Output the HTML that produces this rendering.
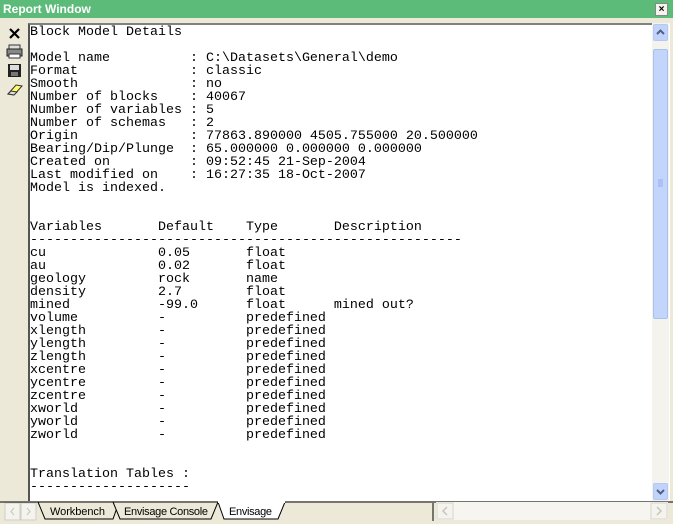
<!DOCTYPE html>
<html><head><style>
body{margin:0;width:673px;height:524px;background:#ece9d8;position:relative;overflow:hidden;font-family:"Liberation Sans",sans-serif}
#title{position:absolute;left:0;top:0;width:673px;height:18px;background:#5dbb7a;color:#fff;font-weight:bold;font-size:12px;line-height:18px;padding-left:3px;box-sizing:border-box}
#cls{position:absolute;right:5px;top:3px;width:11px;height:11px;background:#f4f3ee;border:1px solid #888;font-size:10px;line-height:11px;text-align:center;color:#000;font-weight:bold}
#text{position:absolute;left:28px;top:23px;width:624px;height:478px;background:#fff;border-left:2px solid #555;border-top:2px solid #808080;box-sizing:border-box;overflow:hidden}
pre{margin:0;padding:1px 0 0 0;font-family:"Liberation Mono",monospace;font-size:13.33px;line-height:13px;color:#000}
#vs{position:absolute;left:652px;top:23px;width:17px;height:478px;background:#f4f3ee}
.btn{position:absolute;left:1px;width:15px;height:17px;background:#c1d3fb;border:1px solid #b3c8f3;border-radius:2px;box-sizing:border-box}
#thumb{position:absolute;left:1px;top:26px;width:15px;height:270px;background:#c4d5fc;border:1px solid #aac0f0;border-radius:2px;box-sizing:border-box}
#bot{position:absolute;left:0;top:501px;width:673px;height:23px;background:#ece9d8}
</style></head><body>
<div id="title">Report Window<div id="cls">×</div></div>
<svg style="position:absolute;left:0;top:18px" width="28" height="90">
<path d="M10 11 L19 20 M19 11 L10 20" stroke="#000" stroke-width="2.2"/>
<rect x="9" y="27" width="11" height="5" fill="#ddd" stroke="#333"/>
<rect x="7" y="31" width="15" height="7" fill="#888" stroke="#222"/>
<rect x="9" y="36" width="11" height="4" fill="#fff" stroke="#333"/>
<rect x="8" y="46" width="13" height="13" fill="#222"/>
<rect x="10" y="47" width="9" height="5" fill="#ddd"/>
<rect x="11" y="54" width="7" height="4" fill="#777"/>
<path d="M8 76 L16 67 L22 68 L14 77 Z" fill="#ff6" stroke="#333"/>
<path d="M8 76 L11 73 L17 74 L14 77 Z" fill="#ddd" stroke="#333"/>
</svg>
<div id="text"><pre>Block Model Details

Model name          : C:\Datasets\General\demo
Format              : classic
Smooth              : no
Number of blocks    : 40067
Number of variables : 5
Number of schemas   : 2
Origin              : 77863.890000 4505.755000 20.500000
Bearing/Dip/Plunge  : 65.000000 0.000000 0.000000
Created on          : 09:52:45 21-Sep-2004
Last modified on    : 16:27:35 18-Oct-2007
Model is indexed.


Variables       Default    Type       Description
------------------------------------------------------
cu              0.05       float
au              0.02       float
geology         rock       name
density         2.7        float
mined           -99.0      float      mined out?
volume          -          predefined
xlength         -          predefined
ylength         -          predefined
zlength         -          predefined
xcentre         -          predefined
ycentre         -          predefined
zcentre         -          predefined
xworld          -          predefined
yworld          -          predefined
zworld          -          predefined


Translation Tables :
--------------------</pre></div>
<div id="vs"><div class="btn" style="top:1px"><svg width="13" height="15"><path d="M3 9 L6.5 5.5 L10 9" stroke="#4d6185" stroke-width="2" fill="none"/></svg></div><div id="thumb"><svg width="13" height="268"><path d="M4 130h5M4 132h5M4 134h5M4 136h5" stroke="#8faaf0"/></svg></div><div class="btn" style="top:460px"><svg width="13" height="15"><path d="M3 6 L6.5 9.5 L10 6" stroke="#4d6185" stroke-width="2" fill="none"/></svg></div></div>
<div style="position:absolute;left:669px;top:23px;width:1px;height:478px;background:#fff"></div>
<div id="bot">
<svg width="673" height="23" style="position:absolute;left:0;top:0">
<rect x="5" y="2" width="15" height="17" fill="#f4f3ee" stroke="#d0cfc4"/>
<rect x="21" y="2" width="15" height="17" fill="#f4f3ee" stroke="#d0cfc4"/>
<path d="M14 7 L11 10.5 L14 14" stroke="#c8c6bb" fill="none"/><path d="M27 7 L30 10.5 L27 14" stroke="#c8c6bb" fill="none"/>
<path d="M38 1 L45 18 L113 18 L119 1" fill="#ece9d8" stroke="#000"/>
<path d="M113 1 L120 18 L211 18 L218 1" fill="#ece9d8" stroke="#000"/>
<path d="M218 1 L224 18 L278 18 L285 1" fill="#fff" stroke="#000"/>
<line x1="0" y1="1" x2="673" y2="1" stroke="#000"/>
<line x1="218" y1="1" x2="285" y2="1" stroke="#fff" stroke-width="2"/>
<text x="50" y="14" font-size="11" font-family="Liberation Sans" fill="#000" textLength="55">Workbench</text>
<text x="124" y="14" font-size="11" font-family="Liberation Sans" fill="#000" textLength="84">Envisage Console</text>
<text x="229" y="14" font-size="11" font-family="Liberation Sans" fill="#000" textLength="43">Envisage</text>
<line x1="433" y1="2" x2="433" y2="20" stroke="#000"/>
<rect x="436" y="1" width="232" height="18" fill="#f6f5f0"/>
<rect x="437" y="2" width="16" height="16" fill="#f4f3ee" stroke="#d8d6cc"/>
<rect x="651" y="2" width="16" height="16" fill="#f4f3ee" stroke="#d8d6cc"/>
<path d="M447 6 L443 10 L447 14" stroke="#c8c6bb" stroke-width="1.5" fill="none"/><path d="M657 6 L661 10 L657 14" stroke="#c8c6bb" stroke-width="1.5" fill="none"/>
</svg></div>
</body></html>
